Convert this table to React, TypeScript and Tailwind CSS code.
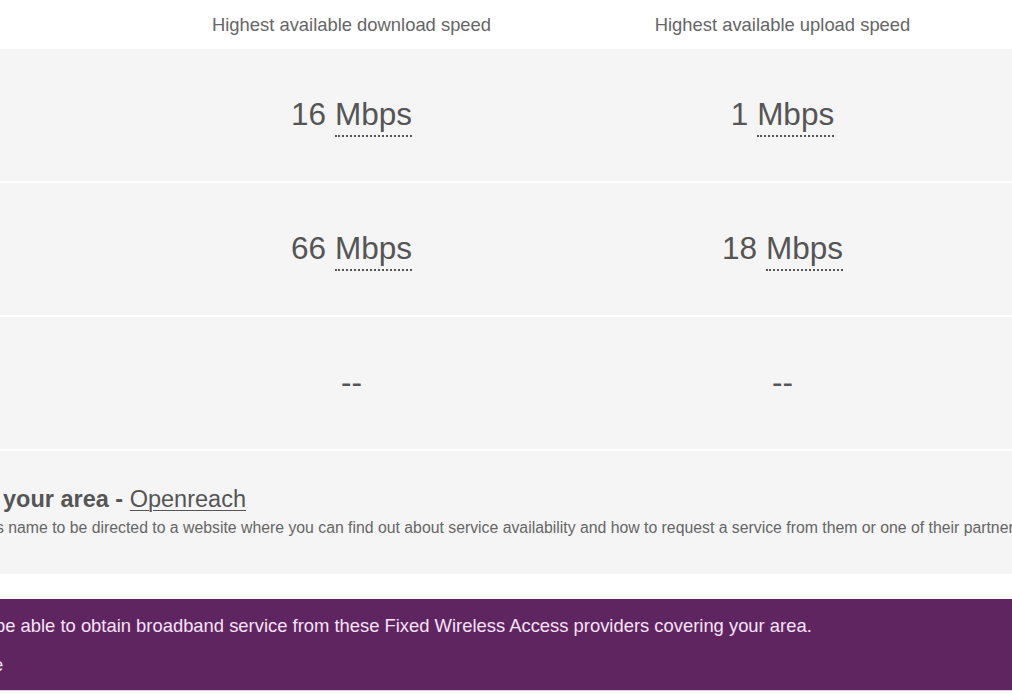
import React from "react";

const font = { fontFamily: '"Liberation Sans", Arial, sans-serif' };

function Speed({ value }: { value: string }) {
  return (
    <div className="flex items-baseline justify-center pt-[6px] text-[31.5px] leading-none text-[#555555]">
      <span>{value}&nbsp;</span>
      <span className="border-b-2 border-dotted border-[#555555] pb-[4px]">Mbps</span>
    </div>
  );
}

function Row({ down, up }: { down: React.ReactNode; up: React.ReactNode }) {
  return (
    <div className="grid h-[132px] grid-cols-[136px_431px_431px_1fr] items-center bg-[#f5f5f5]">
      <div />
      <div className="flex justify-center">{down}</div>
      <div className="flex justify-center">{up}</div>
      <div />
    </div>
  );
}

function Dash() {
  return <div className="text-[31.5px] leading-none text-[#555555]">--</div>;
}

function Clipped({ hidden, shown, offset }: { hidden: string; shown: React.ReactNode; offset: string }) {
  return (
    <div className={`flex whitespace-nowrap ${offset}`}>
      <span className="flex w-0 justify-end">{hidden}</span>
      <span>{shown}</span>
    </div>
  );
}

export default function App() {
  return (
    <div style={font} className="h-[700px] w-[1012px] overflow-hidden bg-white">
      <div className="grid h-[49px] grid-cols-[136px_431px_431px_1fr] items-center text-[18.4px] text-[#666666]">
        <div />
        <div className="text-center">Highest available download speed</div>
        <div className="text-center">Highest available upload speed</div>
        <div />
      </div>
      <div className="flex flex-col gap-[2px]">
        <Row down={<Speed value="16" />} up={<Speed value="1" />} />
        <Row down={<Speed value="66" />} up={<Speed value="18" />} />
        <Row down={<Dash />} up={<Dash />} />
        <div className="h-[123px] bg-[#f5f5f5] pt-[33px]">
          <div className="text-[23.5px] leading-[30px] text-[#555555]">
            <Clipped
              offset="ml-[3px]"
              hidden={"Fixed line providers in\u00a0"}
              shown={
                <>
                  <span className="font-bold">your area - </span>
                  <span className="underline underline-offset-[3px] decoration-1">Openreach</span>
                </>
              }
            />
          </div>
          <div className="mt-[4px] text-[15.8px] leading-[20px] text-[#666666]">
            <Clipped
              offset="-ml-[4px]"
              hidden="Click on the provider’"
              shown="s name to be directed to a website where you can find out about service availability and how to request a service from them or one of their partners."
            />
          </div>
        </div>
      </div>
      <div className="mt-[25px] h-[92px] border-b border-[#e9c9ea] bg-[#5f2561] pt-[13px] text-[18.4px] text-[#f7e3f7]">
        <Clipped
          offset="-ml-[5px]"
          hidden={"You may\u00a0"}
          shown="be able to obtain broadband service from these Fixed Wireless Access providers covering your area."
        />
        <div className="mt-[11px]">
          <Clipped offset="-ml-[7px]" hidden="Provider nam" shown="e" />
        </div>
      </div>
    </div>
  );
}
